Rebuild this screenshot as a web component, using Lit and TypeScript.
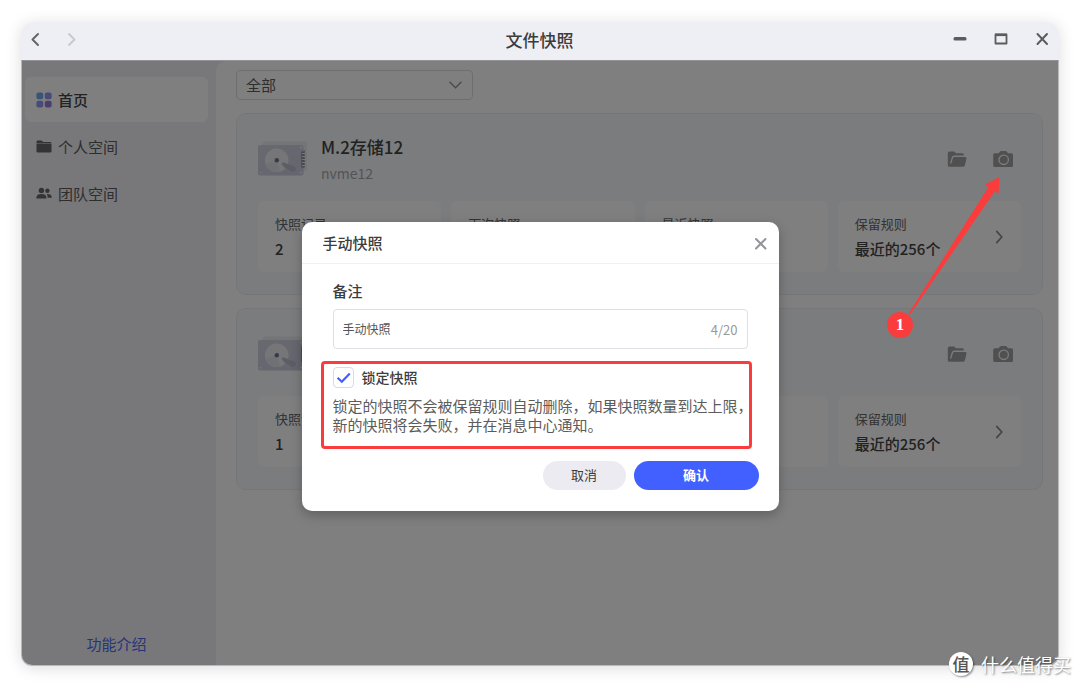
import { LitElement, html, css, svg } from "lit";
import { customElement, property, state } from "lit/decorators.js";
import { classMap } from "lit/directives/class-map.js";

const chevron = svg`<path d="M1.5 1.5 7 7.5 1.5 13.5" fill="none" stroke="currentColor" stroke-width="1.8" stroke-linecap="round" stroke-linejoin="round"/>`;

const navIcons: Record<string, unknown> = {
  home: html`<svg width="16" height="16" viewBox="0 0 16 16" aria-hidden="true">
    <rect x="0.4" y="0.4" width="6.8" height="6.8" rx="2" fill="#72a8ee"/>
    <rect x="8.8" y="0.4" width="6.8" height="6.8" rx="2" fill="#8f98ec"/>
    <rect x="0.4" y="8.8" width="6.8" height="6.8" rx="2" fill="#8f98ec"/>
    <rect x="8.8" y="8.8" width="6.8" height="6.8" rx="2" fill="#9a7ad8"/>
  </svg>`,
  folder: html`<svg width="16" height="16" viewBox="0 0 16 16" aria-hidden="true">
    <path d="M0.5 2.7Q0.5 1.5 1.7 1.5H5.6L7.2 2.9H14.3Q15.5 2.9 15.5 3.9H0.5Z" fill="#666"/>
    <path d="M0.5 4.4H15.5V12.4Q15.5 13.5 14.3 13.5H1.7Q0.5 13.5 0.5 12.4Z" fill="#666"/>
  </svg>`,
  team: html`<svg width="16" height="16" viewBox="0 0 16 16" aria-hidden="true">
    <circle cx="5.4" cy="4.4" r="2.7" fill="#666"/>
    <path d="M0.4 12.6V11.4C0.4 9.1 2.6 8 5.4 8S10.4 9.1 10.4 11.4V12.6Z" fill="#666"/>
    <circle cx="11.4" cy="4.8" r="2.2" fill="#666"/>
    <path d="M10.6 8C13.5 7.7 15.7 9 15.7 11V11.8H11.6C11.7 10.2 11.4 9 10.6 8Z" fill="#666"/>
  </svg>`,
};

interface Disk {
  name: string;
  device: string;
  stats: { label: string; value: string }[];
}

const disks: Disk[] = [
  {
    name: "M.2存储12",
    device: "nvme12",
    stats: [
      { label: "快照记录", value: "2" },
      { label: "下次快照", value: "" },
      { label: "最近快照", value: "" },
      { label: "保留规则", value: "最近的256个" },
    ],
  },
  {
    name: "",
    device: "",
    stats: [
      { label: "快照记录", value: "1" },
      { label: "", value: "" },
      { label: "", value: "" },
      { label: "保留规则", value: "最近的256个" },
    ],
  },
];

const reset = css`
  *, *::before, *::after { box-sizing: border-box; }
  button {
    font: inherit; color: inherit; background: none; border: 0; margin: 0; padding: 0;
    cursor: pointer; display: inline-flex; align-items: center; justify-content: center;
  }
  svg { display: block; flex: none; }
  h1, h2, h3, p { margin: 0; }
`;

@customElement("disk-card")
class DiskCard extends LitElement {
  @property({ attribute: false }) disk!: Disk;

  static styles = [reset, css`
    :host {
      display: block; box-sizing: border-box; background: #f7f9fd;
      border: 1px solid #eaedf3; border-radius: 10px; padding: 24px 21px 22px;
    }
    .head { display: flex; align-items: flex-start; gap: 14px; height: 63px; }
    .disk { margin-top: 3px; }
    .names { flex: 1; display: flex; flex-direction: column; gap: 2px; margin-top: -4px; }
    .name { font-size: 17px; line-height: 26px; font-weight: 500; color: #444; }
    .device { font-size: 14px; line-height: 22px; color: #a8a8aa; }
    .actions { display: flex; gap: 26px; padding: 12px 8px 0 0; color: #a0a0a0; }
    .stats { display: grid; grid-template-columns: repeat(4, 1fr); gap: 10px; }
    .stat {
      display: flex; align-items: center; justify-content: space-between;
      width: 100%; height: 71px; padding: 0 17px; border-radius: 6px; background: #fff; text-align: left;
    }
    .text { display: flex; flex-direction: column; }
    .label { min-height: 24px; font-size: 13px; line-height: 24px; color: #666; }
    .value { min-height: 26px; font-size: 15px; line-height: 26px; font-weight: 500; color: #444; }
    .arrow { color: #888; }
  `];

  render() {
    const { name, device, stats } = this.disk;
    return html`
      <div class="head">
        <svg class="disk" width="49" height="35" viewBox="0 0 49 35" aria-hidden="true">
          <defs><linearGradient id="g" x1="0" y1="0" x2="1" y2="1">
            <stop offset="0" stop-color="#d2d4e0"/><stop offset="1" stop-color="#c8cadc"/>
          </linearGradient></defs>
          <rect x="4.500" y="0.500" width="44.500" height="30" rx="2" fill="#e8eaef"/>
          <path d="M43 9.500h4v17h-4z" fill="#a4a6b4"/>
          <rect x="0" y="4" width="45.500" height="30.500" rx="2" fill="url(#g)"/>
          <path d="M43.300 10.500h2.700v16h-2.700z" fill="#8f919c"/>
          <path d="M44 12.500h3M44 15.500h3M44 18.500h3M44 21.500h3M44 24.500h3" stroke="#eceef5"/>
          <circle cx="18.700" cy="19.300" r="11.800" fill="#ececf0"/>
          <path d="M18.700 19.300 7.500 23A11.800 11.800 0 0 0 22 30.600Z" fill="#e2e3ea"/>
          <path d="M23.500 22.500Q25 21 27 22L36 25.200Q38.800 27 37.500 29.600 36 31.600 33.600 30.800L26 26Z" fill="#b8bacb"/>
          <circle cx="18.800" cy="19.200" r="2.200" fill="#6d7494"/>
          <circle cx="43" cy="6.500" r="1" fill="#f4f4fa"/><circle cx="43" cy="31.500" r="1" fill="#f4f4fa"/>
          <circle cx="2.500" cy="31.500" r="0.800" fill="#f4f4fa"/>
        </svg>
        <div class="names">
          <h2 class="name">${name}</h2>
          <p class="device">${device}</p>
        </div>
        <div class="actions">
          <button aria-label="打开文件夹">
            <svg width="20" height="20" viewBox="0 0 20 20" aria-hidden="true">
              <path d="M0.800 3Q0.800 1.500 2.300 1.500H6.700Q7.500 1.500 8 2.200L8.800 3.300H15.300Q17 3.300 17 4.900V5.400H7.200Q5.400 5.400 4.900 7L3 13.400 4.200 13.700 6 8Q6.300 6.900 7.400 6.900H18.300Q19.900 6.900 19.500 8.400L17.900 15.300Q17.500 16.800 16 16.800H2.300Q0.800 16.800 0.800 15.300Z" fill="currentColor"/>
            </svg>
          </button>
          <button aria-label="手动快照">
            <svg width="20" height="20" viewBox="0 0 20 20" aria-hidden="true">
              <path d="M1.700 3.200H5.600L6.900 1.400Q7.300 0.900 8 0.900H12.600Q13.300 0.900 13.700 1.400L15 3.200H18.500Q20 3.200 20 4.700V15.500Q20 17 18.500 17H1.700Q0.200 17 0.200 15.500V4.700Q0.200 3.200 1.700 3.200Z" fill="currentColor"/>
              <circle cx="10.700" cy="9.800" r="4.700" fill="none" stroke="#f7f9fd" stroke-width="1.300"/>
            </svg>
          </button>
        </div>
      </div>
      <div class="stats">
        ${stats.map((s, i) => html`
          <button class="stat">
            <span class="text"><span class="label">${s.label}</span><span class="value">${s.value}</span></span>
            ${i === 3 ? html`<svg class="arrow" width="9" height="14" viewBox="0 0 9 15" aria-hidden="true">${chevron}</svg>` : null}
          </button>`)}
      </div>`;
  }
}

@customElement("snapshot-dialog")
class SnapshotDialog extends LitElement {
  @state() private note = "手动快照";
  @state() private locked = true;

  static styles = [reset, css`
    :host {
      display: block; width: 477px; max-width: 100%; background: #fff; border-radius: 10px;
      box-shadow: 0 4px 12px rgba(0, 0, 0, 0.25); color: #3c3c3c;
    }
    .head {
      display: flex; align-items: center; justify-content: space-between;
      height: 42px; padding: 2px 12px 0 21px; border-bottom: 1px solid #f0f0f3;
    }
    .title { font-size: 15px; line-height: 22px; font-weight: 500; }
    .close { color: #929499; }
    .note { padding: 15px 31px 0; }
    .caption { display: block; font-size: 15px; line-height: 24px; font-weight: 500; }
    .field {
      display: flex; align-items: center; height: 40px; margin-top: 6px; padding: 0 9px;
      border: 1px solid #dfe0e6; border-radius: 4px;
    }
    .input {
      flex: 1; min-width: 0; border: 0; outline: 0; padding: 0; background: none;
      font: inherit; font-size: 12px; line-height: 20px; color: #555;
    }
    .count { font-size: 13px; line-height: 20px; color: #999; padding-top: 2px; }
    .lock {
      margin: 12px 27px 0 19px; padding: 3px 0 11px 9px; height: 88px;
      border: 3px solid #fb3c3c; border-radius: 4px;
    }
    .option { display: flex; align-items: center; gap: 8px; font-size: 14px; line-height: 20px; font-weight: 500; }
    .box { position: relative; display: flex; }
    .check {
      appearance: none; width: 21px; height: 21px; margin: 0;
      border: 1px solid #d8dae6; border-radius: 4px; background: #fff;
    }
    .tick { position: absolute; inset: 0; pointer-events: none; }
    .hint { margin-top: 8px; font-size: 15px; line-height: 19px; color: #5c5c5c; white-space: nowrap; }
    .foot { display: flex; justify-content: flex-end; gap: 8px; padding: 12px 20px 21px; }
    .btn { height: 29px; border-radius: 15px; font-size: 13px; line-height: 20px; }
    .cancel { width: 83px; background: #ecebf1; }
    .ok { width: 125px; background: #4260ff; color: #fff; font-weight: 700; }
  `];

  render() {
    return html`
      <div class="head">
        <h2 class="title">手动快照</h2>
        <button class="close" aria-label="关闭">
          <svg width="13" height="13" viewBox="0 0 13 13" aria-hidden="true">
            <path d="M2 2 11.500 11.500M11.500 2 2 11.500" stroke="currentColor" stroke-width="2" stroke-linecap="round"/>
          </svg>
        </button>
      </div>
      <div class="note">
        <label class="caption" for="note">备注</label>
        <div class="field">
          <input id="note" class="input" maxlength="20" .value=${this.note}
            @input=${(e: Event) => (this.note = (e.target as HTMLInputElement).value)}>
          <span class="count">${this.note.length}/20</span>
        </div>
      </div>
      <div class="lock">
        <label class="option">
          <span class="box">
            <input class="check" type="checkbox" .checked=${this.locked}
              @change=${(e: Event) => (this.locked = (e.target as HTMLInputElement).checked)}>
            ${this.locked ? html`<svg class="tick" width="21" height="21" viewBox="0 0 21 21" aria-hidden="true">
              <path d="M4.600 10.800 8.800 14.700 16.800 6.400" fill="none" stroke="#4260ff" stroke-width="2.200"/>
            </svg>` : null}
          </span>
          锁定快照
        </label>
        <p class="hint">锁定的快照不会被保留规则自动删除，如果快照数量到达上限，<br>新的快照将会失败，并在消息中心通知。</p>
      </div>
      <div class="foot">
        <button class="btn cancel">取消</button>
        <button class="btn ok">确认</button>
      </div>`;
  }
}

@customElement("app-root")
class AppRoot extends LitElement {
  @state() private page = "home";

  static styles = [reset, css`
    :host {
      display: flex; position: relative; box-sizing: border-box; min-height: 100vh;
      padding: 22px 21px 21px; background: #fff; color: #3c3c3c; overflow: hidden;
      font-family: "Noto Sans CJK SC", "Noto Sans", sans-serif;
    }
    .window {
      position: relative; flex: 1; min-width: 0; display: flex; flex-direction: column;
      border-radius: 12px; box-shadow: 0 2px 16px rgba(0, 0, 0, 0.14);
    }
    .bar {
      display: grid; grid-template-columns: 1fr auto 1fr; align-items: center; height: 38px;
      padding: 0 10px 4px 9px; background: #eeeff5; border-radius: 12px 12px 0 0;
    }
    .history { display: flex; gap: 27px; color: #666; }
    .off { color: #c9cacd; }
    .title { padding-top: 2px; font-size: 17px; line-height: 24px; font-weight: 500; }
    .controls { display: flex; gap: 27px; justify-content: flex-end; color: #5c5c5c; }
    .body {
      position: relative; flex: 1; display: flex; background: #f0f1f7; overflow: hidden;
      border: 1px solid #b9b9bc; border-top-color: #929296; border-radius: 0 0 11px 11px;
    }
    .side { width: 194px; flex: none; display: flex; flex-direction: column; padding: 16px 8px 8px 3px; }
    .nav { display: flex; flex-direction: column; gap: 2px; flex: 1; }
    .item {
      display: flex; align-items: center; gap: 6px; height: 45px; padding: 0 11px; border-radius: 6px;
      font-size: 15px; line-height: 22px; color: #5c5c5c; text-decoration: none;
    }
    .active { background: #fff; font-weight: 500; color: #444; }
    .intro { align-self: center; font-size: 15px; line-height: 26px; color: #4f69f5; text-decoration: none; }
    .main {
      flex: 1; min-width: 0; background: #fff; border-top-left-radius: 10px;
      padding: 9px 15px 20px 20px;
    }
    .filter { position: relative; display: block; width: 237px; height: 30px; }
    .select {
      appearance: none; width: 100%; height: 100%; padding: 0 9px; border: 1px solid #dddde2; border-radius: 4px;
      background: #fff; font: inherit; font-size: 15px; line-height: 22px; color: #5c5c5c;
    }
    .caret { position: absolute; right: 11px; top: 11px; color: #999; pointer-events: none; }
    .list { display: flex; flex-direction: column; gap: 13px; margin-top: 13px; }
    .mask {
      position: absolute; inset: 0; display: flex; align-items: center; justify-content: center;
      padding-top: 6px; background: rgba(0, 0, 0, 0.5);
    }
    .pointer { position: absolute; right: 56px; top: 154px; pointer-events: none; }
    .step {
      position: absolute; right: 146px; top: 290px; width: 26px; height: 26px; border-radius: 50%;
      background: #fb3c3c; color: #fff; text-align: center;
      font: 700 17px/26px "Liberation Serif", serif;
    }
    .mark {
      position: absolute; right: 9px; bottom: 9px; display: flex; align-items: center; gap: 8px;
      color: #fff; font-size: 18px; line-height: 28px; text-shadow: 1px 1px 2px rgba(0, 0, 0, 0.5);
    }
    .seal {
      width: 24px; height: 24px; border-radius: 50%; background: #fff; color: #555; text-align: center;
      font-size: 17px; line-height: 24px; font-weight: 500; text-shadow: none;
      box-shadow: 1px 1px 2px rgba(0, 0, 0, 0.45);
    }
  `];

  private items = [
    { id: "home", icon: "home", label: "首页" },
    { id: "personal", icon: "folder", label: "个人空间" },
    { id: "team", icon: "team", label: "团队空间" },
  ];

  render() {
    return html`
      <div class="window">
        <header class="bar">
          <div class="history">
            <button aria-label="后退"><svg width="10" height="15" viewBox="0 0 10 15" aria-hidden="true">
              <path d="M8 2 2.500 7.500 8 13" fill="none" stroke="currentColor" stroke-width="2" stroke-linecap="round" stroke-linejoin="round"/></svg></button>
            <button class="off" aria-label="前进"><svg width="10" height="15" viewBox="0 0 10 15" aria-hidden="true">
              <path d="M2 2 7.500 7.500 2 13" fill="none" stroke="currentColor" stroke-width="2" stroke-linecap="round" stroke-linejoin="round"/></svg></button>
          </div>
          <h1 class="title">文件快照</h1>
          <div class="controls">
            <button aria-label="最小化"><svg width="14" height="14" viewBox="0 0 14 14" aria-hidden="true">
              <rect x="0.500" y="5" width="13" height="3.600" rx="1.500" fill="currentColor"/></svg></button>
            <button aria-label="最大化"><svg width="14" height="14" viewBox="0 0 14 14" aria-hidden="true">
              <path d="M1.500 2.400H12.500V11.500H1.500Z" fill="none" stroke="currentColor" stroke-width="1.800" stroke-linejoin="round"/><path d="M1 2.900H13" stroke="currentColor" stroke-width="2.400"/></svg></button>
            <button aria-label="关闭"><svg width="14" height="14" viewBox="0 0 14 14" aria-hidden="true">
              <path d="M2.500 2 12 12M12 2 2.500 12" stroke="currentColor" stroke-width="2" stroke-linecap="round"/></svg></button>
          </div>
        </header>
        <div class="body">
          <aside class="side">
            <nav class="nav">
              ${this.items.map((it) => html`
                <a href="#${it.id}" class=${classMap({ item: true, active: it.id === this.page })}
                  @click=${() => (this.page = it.id)}>${navIcons[it.icon]}<span>${it.label}</span></a>`)}
            </nav>
            <a class="intro" href="#intro">功能介绍</a>
          </aside>
          <main class="main">
            <label class="filter">
              <select class="select" aria-label="存储空间"><option>全部</option></select>
              <svg class="caret" width="13" height="9" viewBox="0 0 13 9" aria-hidden="true">
                <path d="M1 1.200 6.500 6.800 12 1.200" fill="none" stroke="currentColor" stroke-width="1.500" stroke-linecap="round"/></svg>
            </label>
            <div class="list">${disks.map((d) => html`<disk-card .disk=${d}></disk-card>`)}</div>
          </main>
          <div class="mask"><snapshot-dialog role="dialog" aria-label="手动快照"></snapshot-dialog></div>
        </div>
        <svg class="pointer" width="100" height="140" viewBox="0 0 100 140" aria-hidden="true">
          <path d="M96.500 1 81.700 8.800 85.300 11.200 5.300 138 6.700 139 91.700 15.400 95.500 17.500Z" fill="#fb3c3c"/>
        </svg>
        <span class="step">1</span>
      </div>
      <div class="mark"><span class="seal">值</span><span>什么值得买</span></div>`;
  }
}
